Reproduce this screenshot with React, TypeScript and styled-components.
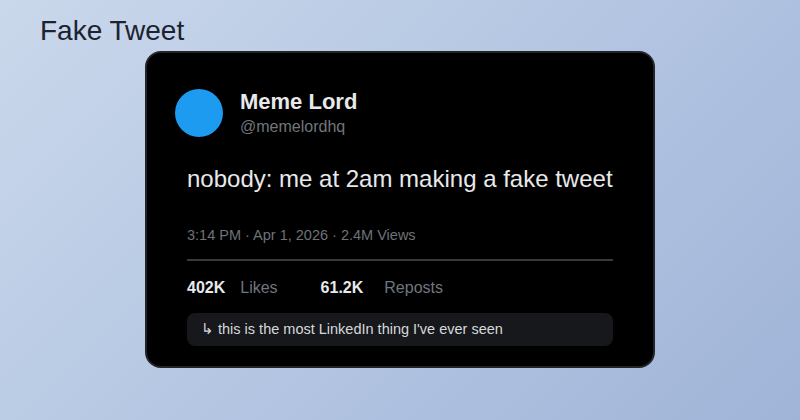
import React from 'react';
import styled, { createGlobalStyle } from 'styled-components';

const GlobalStyle = createGlobalStyle`
  html, body {
    margin: 0;
    padding: 0;
  }
  body {
    font-family: 'Liberation Sans', Arial, sans-serif;
  }
`;

const Page = styled.div`
  box-sizing: border-box;
  width: 800px;
  height: 420px;
  padding: 15px 40px 0;
  background: linear-gradient(135deg, #cad8eb 0%, #b4c6e2 50%, #a0b4d8 100%);
  overflow: hidden;
`;

const Heading = styled.h1`
  margin: 0;
  font-size: 28px;
  font-weight: 400;
  line-height: 32px;
  color: #1b2230;
`;

const Card = styled.div`
  box-sizing: border-box;
  width: 510px;
  margin: 4px auto 0;
  padding: 36px 28px 20px;
  border: 2px solid #222428;
  border-radius: 16px;
  background: #000;
`;

const Header = styled.div`
  display: flex;
  align-items: center;
  gap: 17px;
`;

const Avatar = styled.div`
  width: 48px;
  height: 48px;
  border-radius: 50%;
  background: #1d9bf0;
  flex-shrink: 0;
`;

const NameBlock = styled.div`
  display: flex;
  flex-direction: column;
  gap: 2px;
`;

const Name = styled.div`
  font-size: 22px;
  font-weight: 700;
  line-height: 26px;
  color: #e7e9ea;
`;

const Handle = styled.div`
  font-size: 16px;
  line-height: 20px;
  color: #71767b;
`;

const Content = styled.div`
  padding: 0 12px;
`;

const Body = styled.p`
  margin: 27px 0 0;
  font-size: 24px;
  line-height: 30px;
  color: #e7e9ea;
`;

const Meta = styled.div`
  margin-top: 31px;
  font-size: 14.5px;
  line-height: 20px;
  color: #6e7378;
`;

const Divider = styled.div`
  height: 2px;
  margin-top: 14px;
  background: #36393d;
`;

const Stats = styled.div`
  display: flex;
  gap: 43px;
  margin-top: 17px;
  font-size: 16px;
  line-height: 20px;
`;

const Stat = styled.div<{ $gap: number }>`
  display: flex;
  gap: ${({ $gap }) => $gap}px;
`;

const StatValue = styled.span`
  font-weight: 700;
  color: #e7e9ea;
`;

const StatLabel = styled.span`
  color: #71767b;
`;

const Reply = styled.div`
  margin-top: 15px;
  padding: 6px 14px;
  border-radius: 8px;
  background: #16181c;
  font-size: 14.5px;
  line-height: 21px;
  color: #d6d9db;
`;

const stats = [
  { value: '402K', label: 'Likes', gap: 15 },
  { value: '61.2K', label: 'Reposts', gap: 21 },
];

export default function App() {
  return (
    <>
      <GlobalStyle />
      <Page>
        <Heading>Fake Tweet</Heading>
        <Card>
          <Header>
            <Avatar />
            <NameBlock>
              <Name>Meme Lord</Name>
              <Handle>@memelordhq</Handle>
            </NameBlock>
          </Header>
          <Content>
            <Body>nobody: me at 2am making a fake tweet</Body>
            <Meta>3:14 PM · Apr 1, 2026 · 2.4M Views</Meta>
            <Divider />
            <Stats>
              {stats.map((s) => (
                <Stat key={s.label} $gap={s.gap}>
                  <StatValue>{s.value}</StatValue>
                  <StatLabel>{s.label}</StatLabel>
                </Stat>
              ))}
            </Stats>
            <Reply>↳ this is the most LinkedIn thing I've ever seen</Reply>
          </Content>
        </Card>
      </Page>
    </>
  );
}
